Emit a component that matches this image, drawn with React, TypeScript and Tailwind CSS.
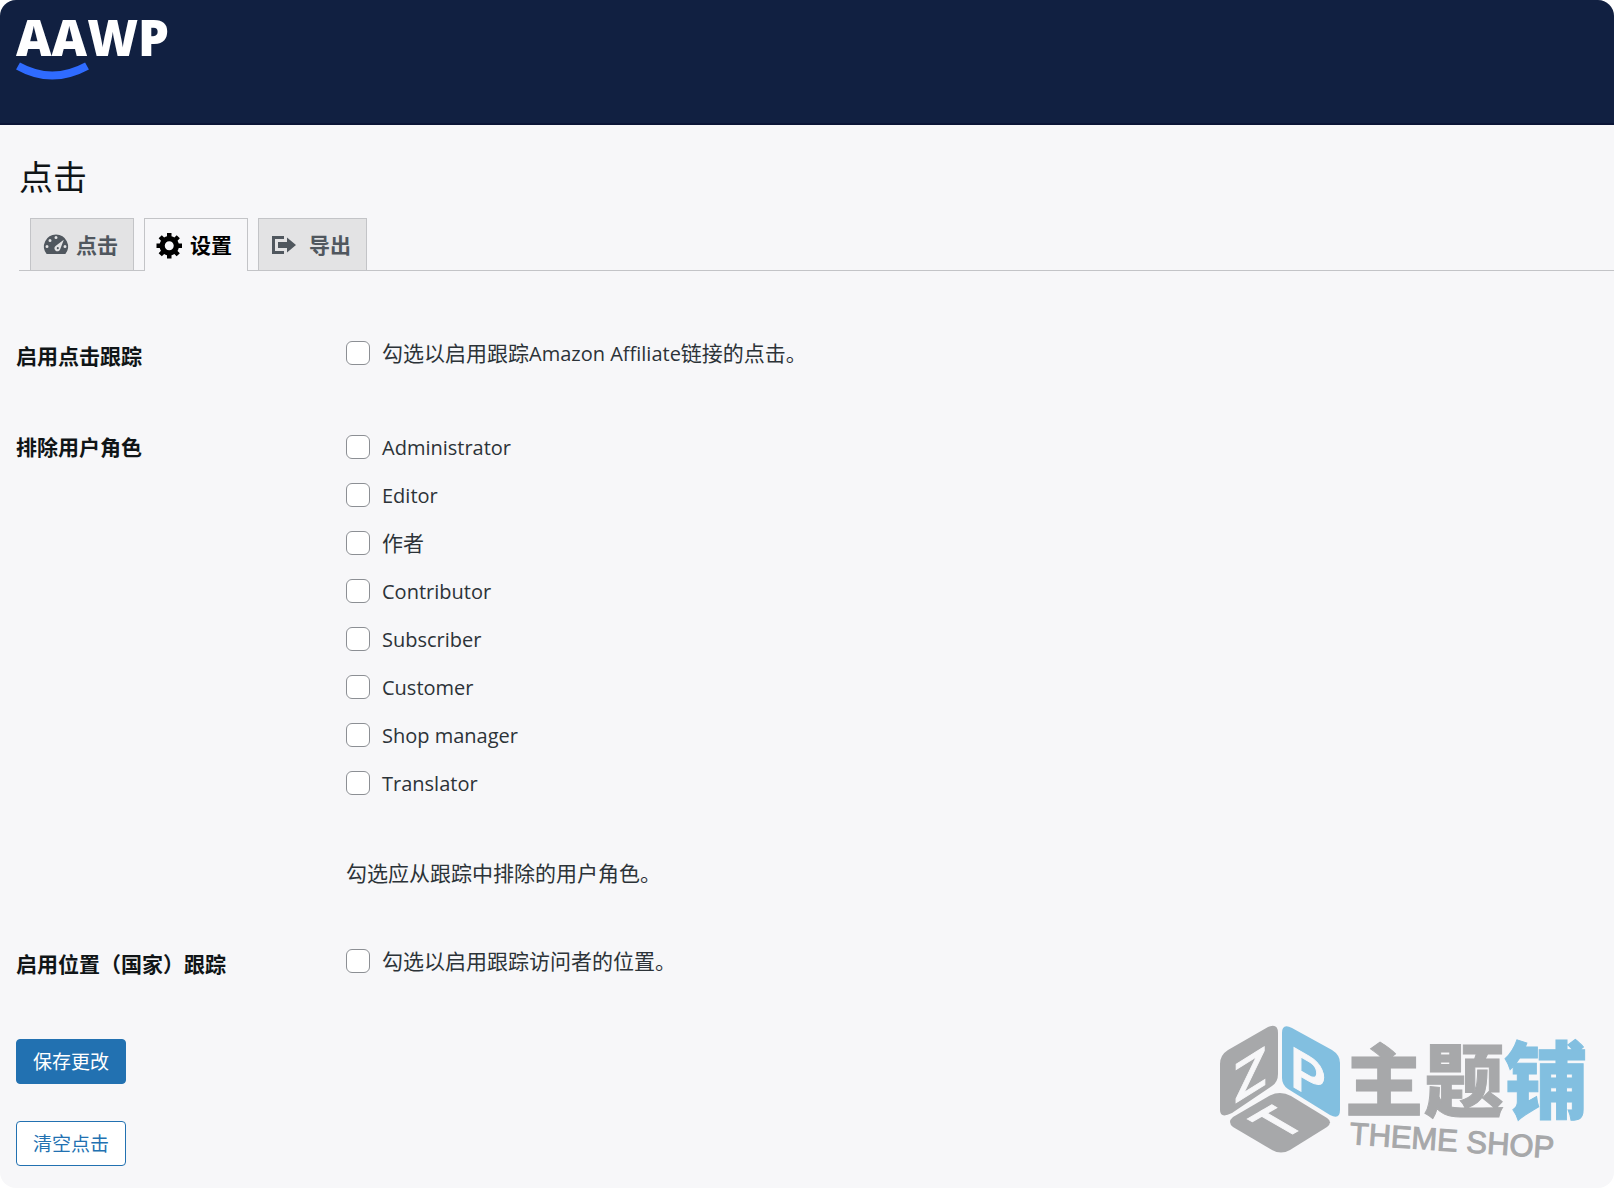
import React from "react";

const roles = [
  "Administrator",
  "Editor",
  "作者",
  "Contributor",
  "Subscriber",
  "Customer",
  "Shop manager",
  "Translator",
];

const BOX =
  "h-6 w-6 shrink-0 appearance-none rounded-md border border-[#8c8f94] bg-white checked:bg-[#2271b1]";

function Check({ id, children }: { id: string; children: React.ReactNode }) {
  return (
    <div className="flex h-6 items-center gap-3">
      <input type="checkbox" id={id} className={BOX} />
      <label htmlFor={id}>{children}</label>
    </div>
  );
}

function Latin({ children }: { children: React.ReactNode }) {
  return <span className="text-[20px]">{children}</span>;
}

function Icon({ d }: { d: string }) {
  return (
    <svg viewBox="0 0 20 20" className="h-[30px] w-[30px] shrink-0" fill="currentColor" fillRule="evenodd" aria-hidden="true">
      <path d={d} />
    </svg>
  );
}

const DASHBOARD =
  "M3.76 16h12.48A7.998 7.998 0 0 0 10 3a7.998 7.998 0 0 0-6.24 13zM10 4a1 1 0 1 1 0 2 1 1 0 0 1 0-2zM6 6a1 1 0 1 1 0 2 1 1 0 0 1 0-2zM15.2 6.5l-2.4 6.4a2 2 0 1 1-3.1-2.3zM11.2 11.4a.7.7 0 1 0 0 1.4.7.7 0 0 0 0-1.4zM4 10a1 1 0 1 1 0 2 1 1 0 0 1 0-2zM16 10a1 1 0 1 1 0 2 1 1 0 0 1 0-2z";
const GEAR =
  "M18 12h-2.18c-.17.7-.44 1.35-.81 1.93l1.54 1.54-2.1 2.1-1.54-1.54c-.58.36-1.23.63-1.91.79V19H8v-2.18c-.68-.16-1.33-.43-1.91-.79l-1.54 1.54-2.12-2.12 1.54-1.54c-.36-.58-.63-1.23-.79-1.91H1V9.03h2.17c.16-.7.44-1.35.8-1.94L2.43 5.55l2.1-2.1 1.54 1.54c.58-.37 1.24-.64 1.93-.81V2h3v2.18c.68.16 1.33.43 1.91.79l1.54-1.54 2.12 2.12-1.54 1.54c.36.59.64 1.24.8 1.94H18V12zm-8.5 1.5c1.66 0 3-1.34 3-3s-1.34-3-3-3-3 1.34-3 3 1.34 3 3 3z";
const MIGRATE = "M4 6h6V4H2v12.01h8V14H4V6zm2 2h6V5l6 5-6 5v-3H6V8z";

function ThemeShopLogo() {
  return (
    <svg viewBox="0 0 374 144" className="h-36 w-[374px] overflow-visible" role="img" aria-label="主题铺 THEME SHOP">
      <path d="M52 3Q62 -1 62 9V50Q62 58 56 62L16 89Q4 95 4 86V40Q4 31 12 26Z" fill="#a7a8aa" />
      <path d="M66 9Q66 -1 76 4L116 26Q124 31 124 39V86Q124 96 114 91L72 65Q66 61 66 54Z" fill="#82bfe0" />
      <path d="M17 93L53 72Q64 66 75 72L111 94Q117 98 111 103L74 126Q65 131 56 126L17 103Q11 98 17 93Z" fill="#a7a8aa" />
      <g fontFamily="Roboto, sans-serif" fontWeight="500" fill="#f7f7f9" stroke="#f7f7f9">
        <text transform="translate(18 80) skewY(-32)" fontSize="54">Z</text>
        <text transform="translate(74 61) skewY(30)" fontSize="56">P</text>
        <text transform="translate(66 116) rotate(-30) skewX(30)" fontSize="50">T</text>
      </g>
      <g fontFamily="'Noto Sans CJK SC', sans-serif" fontWeight="900" strokeWidth="1">
        <text x="129" y="86" fontSize="78" fill="#a7a8aa" stroke="#a7a8aa">主</text>
        <text x="208" y="86" fontSize="80" fill="#a7a8aa" stroke="#a7a8aa">题</text>
        <text x="288" y="88" fontSize="84" fill="#82bfe0" stroke="#82bfe0">铺</text>
      </g>
      <text
        transform="translate(133 120) rotate(4)"
        fontFamily="'Liberation Sans', sans-serif"
        fontSize="31"
        fill="#a7a8aa"
        stroke="#a7a8aa"
      >
        THEME SHOP
      </text>
    </svg>
  );
}

const TAB = "flex items-center border-x border-t border-[#c3c4c7] pl-[10px] pr-[15px] text-[21px] font-bold";

export default function App() {
  return (
    <div className="min-h-screen bg-white">
      <div className="relative flex min-h-screen flex-col overflow-hidden rounded-2xl bg-[#f7f7f9] font-['Open_Sans','Noto_Sans_CJK_SC',sans-serif] text-[21px] leading-6 text-[#2c3338]">
        <header className="h-[125px] border-b-2 border-[#0b1536] bg-[#112041] px-4 pt-4">
          <svg viewBox="0 0 170 64" className="h-16 w-[170px] overflow-visible" role="img" aria-label="AAWP">
            <text x="0" y="40" fontFamily="'Open Sans', sans-serif" fontWeight="800" fontSize="49" fill="#fff">
              AAWP
            </text>
            <path d="M2 50Q36 69 71 50" fill="none" stroke="#2f6bff" strokeWidth="8" />
          </svg>
        </header>

        <h1 className="mt-[30px] ml-[19px] text-[34px] leading-[44px] text-[#101517]">点击</h1>

        <nav className="mt-[19px] ml-[19px] flex gap-[10px] border-b border-[#c3c4c7] pl-[11px]">
          <a href="#clicks" className={`${TAB} h-[52px] bg-[#e3e3e4] text-[#50575e]`}>
            <Icon d={DASHBOARD} />
            <span className="ml-[5px]">点击</span>
          </a>
          <a href="#settings" className={`${TAB} -mb-px h-[53px] bg-[#f7f7f9] text-black`}>
            <Icon d={GEAR} />
            <span className="ml-[5px]">设置</span>
          </a>
          <a href="#export" className={`${TAB} h-[52px] bg-[#e3e3e4] text-[#50575e]`}>
            <Icon d={MIGRATE} />
            <span className="ml-[10px]">导出</span>
          </a>
        </nav>

        <form className="mt-[70px] px-4 pb-[22px]">
          <div className="grid grid-cols-[330px_1fr]">
            <h2 className="mt-[3px] font-bold text-[#101517]">启用点击跟踪</h2>
            <Check id="track">
              勾选以启用跟踪<Latin>Amazon Affiliate</Latin>链接的点击。
            </Check>
          </div>

          <fieldset className="mt-[67px] grid grid-cols-[330px_1fr]">
            <legend className="contents">
              <span className="font-bold text-[#101517]">排除用户角色</span>
            </legend>
            <div>
              <div className="flex flex-col gap-6">
                {roles.map((role, i) => (
                  <Check key={role} id={`role-${i}`}>
                    {role === "作者" ? role : <Latin>{role}</Latin>}
                  </Check>
                ))}
              </div>
              <p className="mt-[66px]">勾选应从跟踪中排除的用户角色。</p>
            </div>
          </fieldset>

          <div className="mt-16 grid grid-cols-[330px_1fr]">
            <h2 className="mt-[3px] font-bold text-[#101517]">启用位置（国家）跟踪</h2>
            <Check id="location">勾选以启用跟踪访问者的位置。</Check>
          </div>

          <div className="mt-[63px] flex flex-col items-start gap-[37px] text-[19px]">
            <button type="submit" className="h-[45px] rounded border border-[#2271b1] bg-[#2271b1] px-4 text-white">
              保存更改
            </button>
            <button type="button" className="h-[45px] rounded border border-[#2271b1] bg-white px-4 text-[#2271b1]">
              清空点击
            </button>
          </div>
        </form>

        <div className="pointer-events-none absolute right-6 bottom-5">
          <ThemeShopLogo />
        </div>
      </div>
    </div>
  );
}
